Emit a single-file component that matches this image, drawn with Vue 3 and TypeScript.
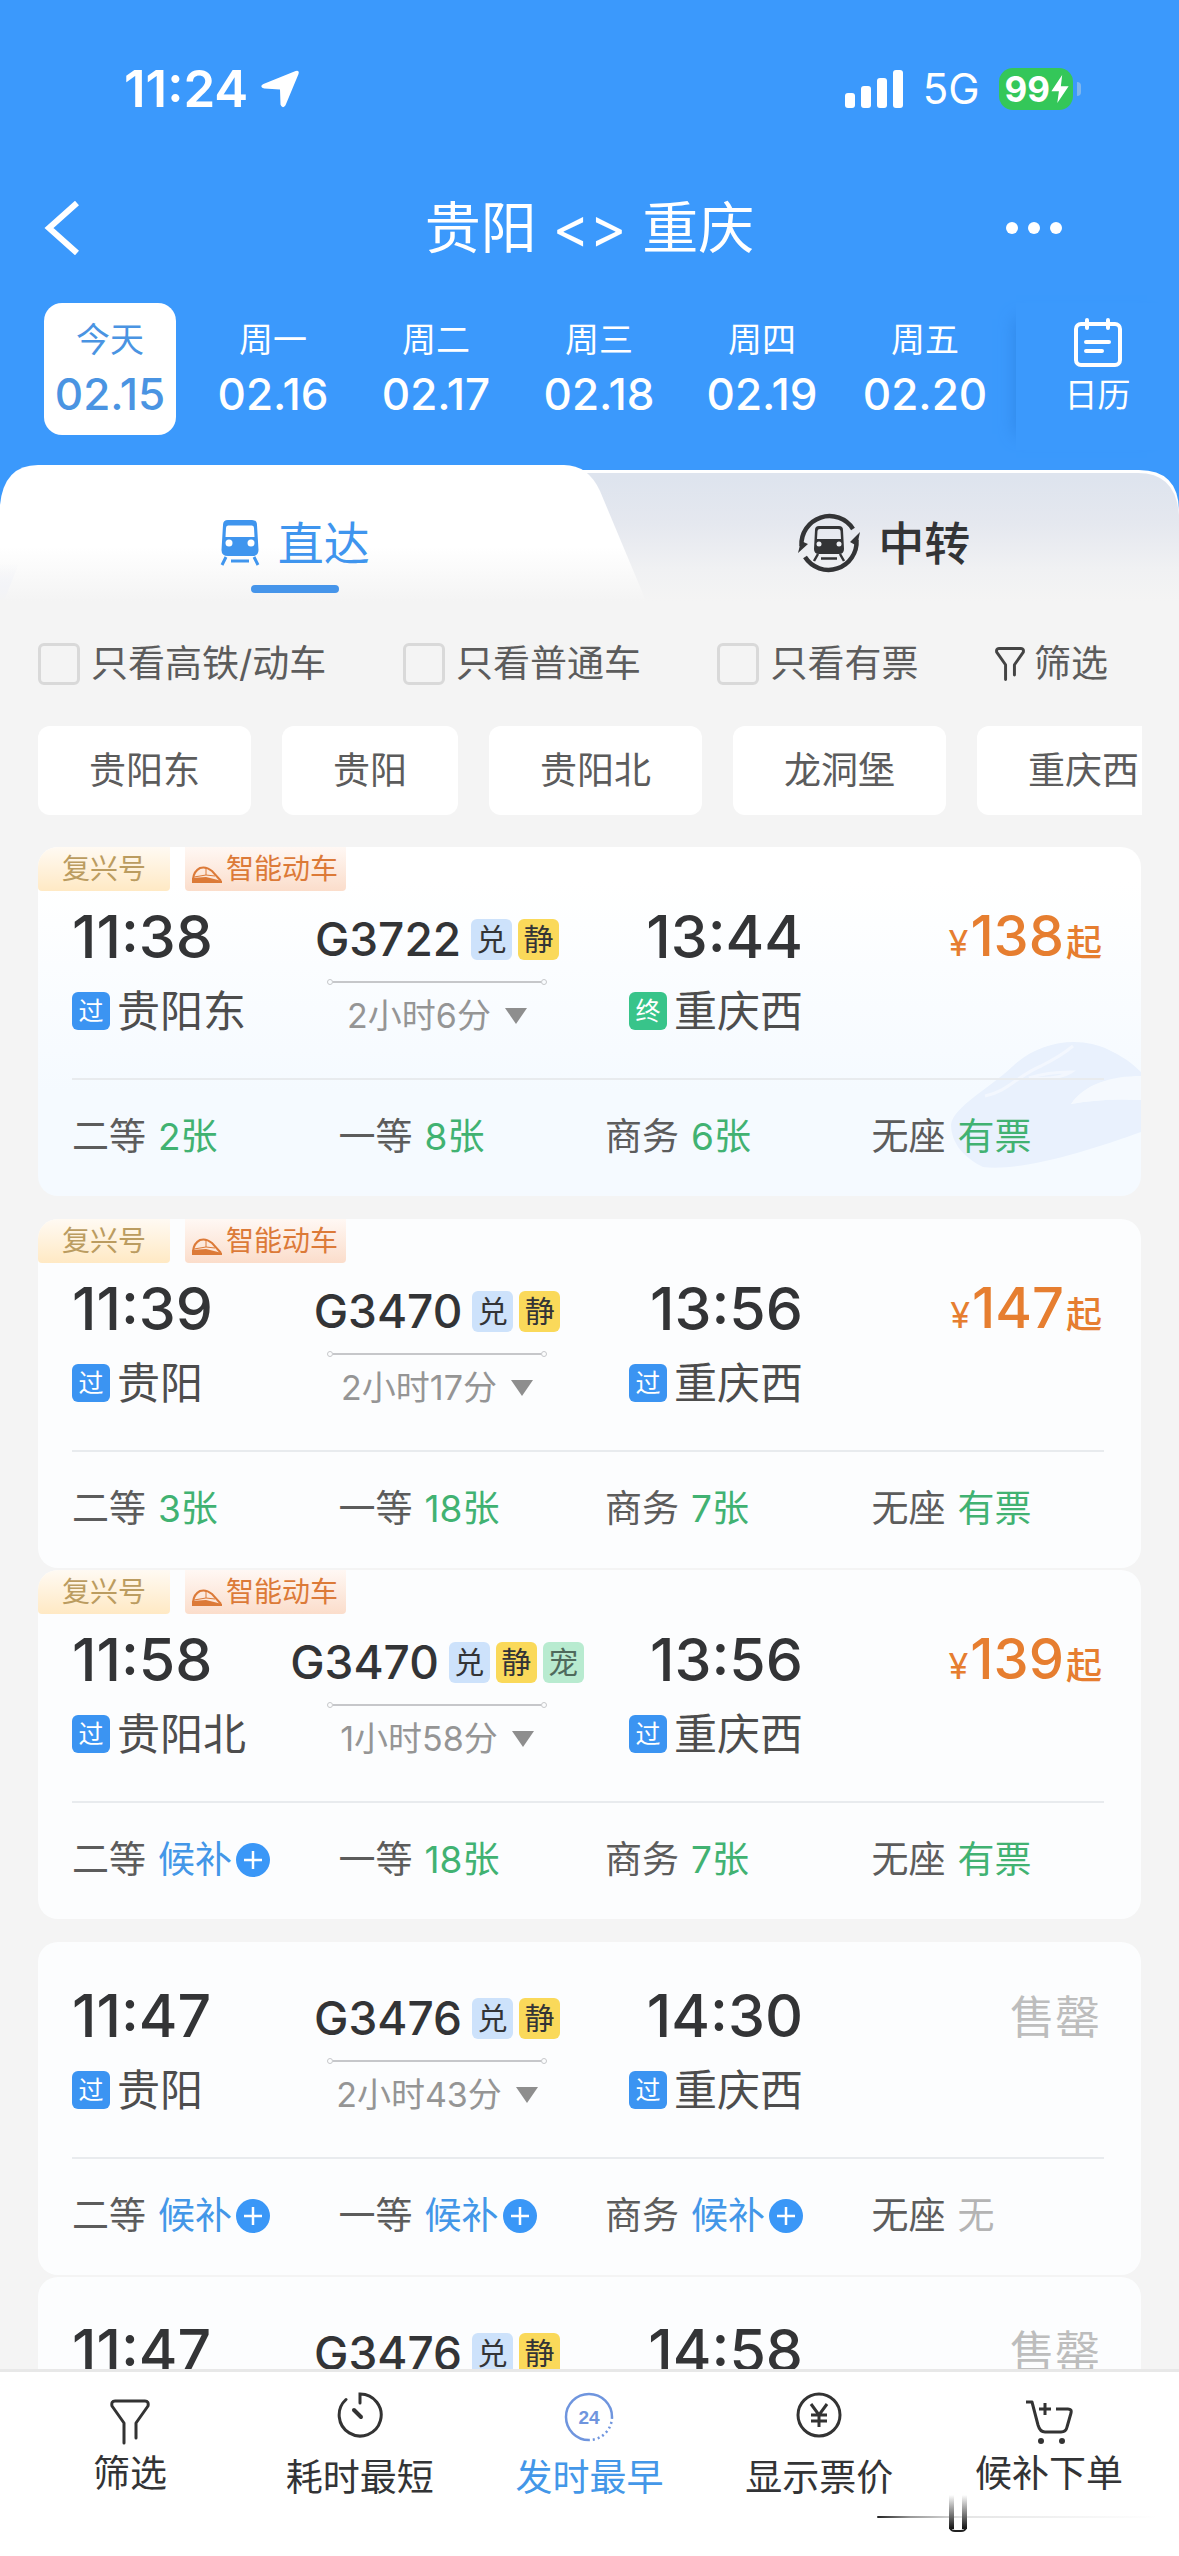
<script setup lang="ts">
interface Seat {
  name: string
  value: string
  kind: 'ok' | 'wait' | 'none'
}

interface Station {
  name: string
  mark: string
}

interface Train {
  id: number
  tagged: boolean
  art: boolean
  joined: boolean
  depart: string
  arrive: string
  from: Station
  to: Station
  no: string
  badges: string[]
  duration: string
  price: string
  seats: Seat[]
}

const days = [
  { week: '今天', date: '02.15' },
  { week: '周一', date: '02.16' },
  { week: '周二', date: '02.17' },
  { week: '周三', date: '02.18' },
  { week: '周四', date: '02.19' },
  { week: '周五', date: '02.20' },
]

const filters = ['只看高铁/动车', '只看普通车', '只看有票']
const stations = ['贵阳东', '贵阳', '贵阳北', '龙洞堡', '重庆西']

const badgeClass: Record<string, string> = { 兑: 'blue', 静: 'yellow', 宠: 'green' }

const ok = (name: string, value: string): Seat => ({ name, value, kind: 'ok' })
const wait = (name: string): Seat => ({ name, value: '候补', kind: 'wait' })

const trains: Train[] = [
  {
    id: 1, tagged: true, art: true, joined: false,
    depart: '11:38', arrive: '13:44',
    from: { name: '贵阳东', mark: '过' }, to: { name: '重庆西', mark: '终' },
    no: 'G3722', badges: ['兑', '静'], duration: '2小时6分', price: '138',
    seats: [ok('二等', '2张'), ok('一等', '8张'), ok('商务', '6张'), ok('无座', '有票')],
  },
  {
    id: 2, tagged: true, art: false, joined: false,
    depart: '11:39', arrive: '13:56',
    from: { name: '贵阳', mark: '过' }, to: { name: '重庆西', mark: '过' },
    no: 'G3470', badges: ['兑', '静'], duration: '2小时17分', price: '147',
    seats: [ok('二等', '3张'), ok('一等', '18张'), ok('商务', '7张'), ok('无座', '有票')],
  },
  {
    id: 3, tagged: true, art: false, joined: true,
    depart: '11:58', arrive: '13:56',
    from: { name: '贵阳北', mark: '过' }, to: { name: '重庆西', mark: '过' },
    no: 'G3470', badges: ['兑', '静', '宠'], duration: '1小时58分', price: '139',
    seats: [wait('二等'), ok('一等', '18张'), ok('商务', '7张'), ok('无座', '有票')],
  },
  {
    id: 4, tagged: false, art: false, joined: false,
    depart: '11:47', arrive: '14:30',
    from: { name: '贵阳', mark: '过' }, to: { name: '重庆西', mark: '过' },
    no: 'G3476', badges: ['兑', '静'], duration: '2小时43分', price: '',
    seats: [wait('二等'), wait('一等'), wait('商务'), { name: '无座', value: '无', kind: 'none' }],
  },
  {
    id: 5, tagged: false, art: false, joined: true,
    depart: '11:47', arrive: '14:58',
    from: { name: '贵阳', mark: '过' }, to: { name: '重庆西', mark: '过' },
    no: 'G3476', badges: ['兑', '静'], duration: '3小时11分', price: '',
    seats: [wait('二等'), wait('一等'), wait('商务'), { name: '无座', value: '无', kind: 'none' }],
  },
]
</script>

<template>
  <div class="app">
    <header class="top">
      <div class="status">
        <div class="clock">
          <span>11:24</span>
          <svg width="40" height="40" viewBox="0 0 40 40">
            <path d="M36 3 Q38.500 2 37.600 4.500 L24.500 36 Q22.600 38.500 21.500 35.500 L21 20.500 Q20.900 19.500 19.900 19.500 L4.500 18.500 Q0.500 17.500 3.800 16 Z" fill="#fff" stroke="#fff" stroke-width="2" stroke-linejoin="round" />
          </svg>
        </div>
        <div class="signal">
          <svg width="60" height="40" viewBox="0 0 60 40" fill="#fff">
            <rect x="0" y="24" width="10" height="15" rx="3" />
            <rect x="16" y="17" width="10" height="22" rx="3" />
            <rect x="32" y="9" width="10" height="30" rx="3" />
            <rect x="48" y="1" width="10" height="38" rx="3" />
          </svg>
          <span class="net">5G</span>
          <span class="battery">
            <span>99</span>
            <svg width="20" height="28" viewBox="0 0 18 26"><path d="M11 0 L1 15 H8 L6.5 26 L17 10.5 H9.8 Z" fill="#fff" /></svg>
          </span>
          <i class="nub"></i>
        </div>
      </div>

      <div class="nav">
        <button class="icon-btn" aria-label="返回">
          <svg width="38" height="54" viewBox="0 0 38 54"><path d="M35 2 L7 27 L35 52" fill="none" stroke="#fff" stroke-width="6" /></svg>
        </button>
        <h1>贵阳 &lt;&gt; 重庆</h1>
        <button class="icon-btn more" aria-label="更多">
          <svg width="58" height="14" viewBox="0 0 58 14" fill="#fff"><circle cx="7" cy="7" r="6" /><circle cx="29" cy="7" r="6" /><circle cx="51" cy="7" r="6" /></svg>
        </button>
      </div>

      <div class="dates">
        <div class="days">
          <button v-for="(d, i) in days" :key="d.date" class="day" :class="{ active: i === 0 }">
            <span class="week">{{ d.week }}</span>
            <span class="date">{{ d.date }}</span>
          </button>
        </div>
        <button class="calendar">
          <svg width="50" height="50" viewBox="0 0 50 50" fill="none" stroke="#fff" stroke-width="4" stroke-linecap="round">
            <rect x="3" y="6" width="44" height="41" rx="5" />
            <path d="M14 2v8M35 2v8M13 24h23M13 33h16" />
          </svg>
          <span>日历</span>
        </button>
      </div>
    </header>

    <div class="tabs">
      <svg class="tabs-bg" viewBox="0 0 1179 136" preserveAspectRatio="none">
        <defs>
          <linearGradient id="tabRight" x1="0" y1="0" x2="0" y2="1">
            <stop offset="0.04" stop-color="#dee4ee" />
            <stop offset="0.4" stop-color="#e5e8ef" />
            <stop offset="0.75" stop-color="#f0f1f3" />
            <stop offset="1" stop-color="#f4f4f4" />
          </linearGradient>
          <linearGradient id="tabLeft" x1="0" y1="0" x2="0" y2="1">
            <stop offset="0" stop-color="#fff" />
            <stop offset="0.6" stop-color="#fff" />
            <stop offset="1" stop-color="#f4f4f4" />
          </linearGradient>
          <linearGradient id="tabEdge" x1="0" y1="0" x2="0" y2="1">
            <stop offset="0.5" stop-color="#f3f4f8" stop-opacity="0" />
            <stop offset="0.8" stop-color="#f3f4f8" />
            <stop offset="1" stop-color="#f4f4f4" />
          </linearGradient>
        </defs>
        <path d="M540 5 H1139 Q1179 5 1179 47 V136 H540 Z" fill="#fff" />
        <path d="M540 8 H1138 Q1176 8 1179 50 V136 H540 Z" fill="url(#tabRight)" />
        <path d="M0 136 V40 Q4 0 38 0 H564 Q588 0 600 26 L646 136 Z" fill="url(#tabLeft)" />
        <path d="M0 60 H34 L4 136 H0 Z" fill="url(#tabEdge)" />
      </svg>
      <div class="tabs-row">
        <button class="tab active">
          <span class="tab-label">
            <svg width="40" height="46" viewBox="0 0 40 46">
              <path fill="#3f95ee" fill-rule="evenodd" d="M8 0 H32 Q37 0 37 5 L38.500 30 Q38.500 36 32 36 H8 Q1.500 36 1.500 30 L3 5 Q3 0 8 0 Z M8 5.500 Q6 5.500 6 8 L5.500 17 H34.500 L34 8 Q34 5.500 32 5.500 Z" />
              <circle cx="9" cy="23" r="3.500" fill="#fff" /><circle cx="31" cy="23" r="3.500" fill="#fff" />
              <path d="M6 37 L2 45 M34 37 L38 45 M11 41 H29" stroke="#3f95ee" stroke-width="3" fill="none" />
            </svg>
            直达
          </span>
          <i class="underline"></i>
        </button>
        <button class="tab">
          <span class="tab-label">
            <svg width="62" height="62" viewBox="0 0 62 62">
              <g fill="none" stroke="#333436" stroke-width="4.500">
                <path d="M3.500 34 A28 28 0 0 1 55 17" />
                <path d="M58.500 28 A28 28 0 0 1 7 45" />
              </g>
              <path d="M0 41 L3 29 L10 32 Z M62 20 L59 34 L52 30 Z" fill="#333436" />
              <path fill="#333436" fill-rule="evenodd" d="M21 14 H41 Q45 14 45 18 L46 37 Q46 42 41 42 H21 Q16 42 16 37 L17 18 Q17 14 21 14 Z M22 17 Q19.500 17 19.500 19 L19 27 H43 L42.500 19 Q42.500 17 40 17 Z" />
              <circle cx="21" cy="32" r="2.500" fill="#eceef2" /><circle cx="41" cy="32" r="2.500" fill="#eceef2" />
              <path d="M20 42 L16 49 M42 42 L46 49 M23 46.500 H39" stroke="#333436" stroke-width="2.500" />
            </svg>
            中转
          </span>
          <i class="underline"></i>
        </button>
      </div>
    </div>

    <div class="filters">
      <label v-for="f in filters" :key="f" class="check"><input type="checkbox" />{{ f }}</label>
      <button class="filter-btn">
        <svg width="30" height="34" viewBox="0 0 40 46" fill="none" stroke="#444" stroke-width="4" stroke-linejoin="round" stroke-linecap="round">
          <path d="M14 44 V24 L2 7 Q1 2 5 2 H35 Q39 2 38 7 L26 24 V38" />
        </svg>
        筛选
      </button>
    </div>

    <div class="chips">
      <button v-for="s in stations" :key="s" class="chip">{{ s }}</button>
    </div>

    <main class="list">
      <article v-for="t in trains" :key="t.id" class="card" :class="{ art: t.art, joined: t.joined, plain: !t.tagged }">
        <svg v-if="t.art" class="watermark" width="190" height="126" viewBox="0 0 190 126">
          <path d="M0 82 C4 64 36 48 62 24 C90 -2 130 -6 158 8 Q176 16 190 30 V36 C160 34 134 42 120 62 Q152 56 190 58 V90 C140 108 70 130 32 125 C14 116 0 102 0 82 Z" fill="#e9f1fd" />
          <path d="M190 34 C160 34 134 42 120 62 Q152 56 190 58 Z" fill="#f5f9fe" />
          <path d="M34 54 C56 50 66 34 90 24 Q110 14 122 4 M78 36 Q96 30 120 30 Q108 38 78 36" fill="none" stroke="#f3f7fe" stroke-width="3" />
        </svg>
        <div v-if="t.tagged" class="tags">
          <span class="tag gold">复兴号</span>
          <span class="tag orange">
            <svg width="32" height="18" viewBox="0 0 32 18" fill="none" stroke="#dc7a38">
              <path d="M2 13 Q3 5 9 2 Q15 0 21 5 L30 15" stroke-width="2" />
              <path d="M15 2 V9 L24 10 M3 11 L15 9" stroke-width="1" />
              <path d="M1 12 L15 11 L31 15 V17 H1 Z" fill="#dc7a38" stroke="none" />
            </svg>
            智能动车
          </span>
        </div>
        <div class="main">
          <div class="stop">
            <time>{{ t.depart }}</time>
            <div class="station"><span class="mark">{{ t.from.mark }}</span>{{ t.from.name }}</div>
          </div>
          <div class="middle">
            <div class="number">
              <span>{{ t.no }}</span>
              <span class="badges"><span v-for="b in t.badges" :key="b" class="badge" :class="badgeClass[b]">{{ b }}</span></span>
            </div>
            <svg width="220" height="10" viewBox="0 0 220 10" fill="none" stroke="#c6c7ca">
              <path d="M6 5 H214" stroke-width="2" /><circle cx="3" cy="5" r="2.500" /><circle cx="217" cy="5" r="2.500" />
            </svg>
            <button class="duration">
              {{ t.duration }}
              <svg width="22" height="16" viewBox="0 0 22 16"><path d="M0 0 H22 L11 16 Z" fill="#8e8e8e" /></svg>
            </button>
          </div>
          <div class="stop arrive">
            <time>{{ t.arrive }}</time>
            <div class="station"><span class="mark" :class="{ end: t.to.mark === '终' }">{{ t.to.mark }}</span>{{ t.to.name }}</div>
          </div>
          <div v-if="t.price" class="price"><small>¥</small><b>{{ t.price }}</b><small class="from">起</small></div>
          <div v-else class="sold">售罄</div>
        </div>
        <hr />
        <div class="seats">
          <div v-for="s in t.seats" :key="s.name" class="seat">
            <span>{{ s.name }}</span>
            <button v-if="s.kind === 'wait'" class="wait">
              {{ s.value }}
              <svg width="34" height="34" viewBox="0 0 34 34"><circle cx="17" cy="17" r="17" fill="#3a97f7" /><path d="M8 17 H26 M17 8 V26" stroke="#fff" stroke-width="2.500" /></svg>
            </button>
            <span v-else :class="s.kind">{{ s.value }}</span>
          </div>
        </div>
      </article>
    </main>

    <nav class="bottom">
      <button class="item high">
        <svg width="40" height="46" viewBox="0 0 40 46" fill="none" stroke="#333" stroke-width="3" stroke-linejoin="round" stroke-linecap="round">
          <path d="M14 44 V24 L2 7 Q1 2 5 2 H35 Q39 2 38 7 L26 24 V39" />
        </svg>
        筛选
      </button>
      <button class="item">
        <svg width="46" height="46" viewBox="0 0 46 46" fill="none" stroke="#333" stroke-width="3" stroke-linecap="round">
          <path d="M9 7.500 A21 21 0 1 0 23 2 V11" /><path d="M17 18 L24 25" stroke-width="4" />
        </svg>
        耗时最短
      </button>
      <button class="item active">
        <svg width="50" height="50" viewBox="0 0 50 50">
          <path d="M25 48 A23 23 0 1 1 48 25" fill="none" stroke="#6f95de" stroke-width="2.500" />
          <path d="M48 25 A23 23 0 0 1 25 48" fill="none" stroke="#6f95de" stroke-width="2.500" stroke-dasharray="2 3" />
          <text x="25" y="32" text-anchor="middle" font-family="Liberation Sans, sans-serif" font-size="19" font-weight="700" fill="#6f95de">24</text>
        </svg>
        发时最早
      </button>
      <button class="item">
        <svg width="46" height="46" viewBox="0 0 46 46" fill="none" stroke="#333" stroke-width="3">
          <circle cx="23" cy="23" r="21" /><path d="M15 12 L23 23 L31 12 M23 23 V35 M15 23 H31 M15 29 H31" />
        </svg>
        显示票价
      </button>
      <button class="item high">
        <svg width="48" height="46" viewBox="0 0 48 46" fill="none" stroke="#333" stroke-width="3" stroke-linejoin="round">
          <path d="M1 3 H7 L13 26 Q15 33 20 33 H36 Q41 33 42 28 L46 14 Q47 10 43 10 H31" />
          <path d="M20 4 V16 M14 10 H26" />
          <circle cx="16" cy="42" r="3" fill="#333" stroke="none" /><circle cx="37" cy="42" r="3" fill="#333" stroke="none" />
        </svg>
        候补下单
      </button>
      <svg class="streak" width="280" height="40" viewBox="0 0 280 40">
        <defs>
          <linearGradient id="streakLine" x1="0" y1="0" x2="1" y2="0">
            <stop offset="0" stop-color="#222" />
            <stop offset="0.12" stop-color="#999" />
            <stop offset="0.3" stop-color="#e4e4e4" />
            <stop offset="1" stop-color="#fff" />
          </linearGradient>
          <linearGradient id="streakBar" x1="0" y1="0" x2="0" y2="1">
            <stop offset="0" stop-color="#fff" />
            <stop offset="1" stop-color="#111" />
          </linearGradient>
        </defs>
        <rect x="0" y="21" width="280" height="2" rx="1" fill="url(#streakLine)" />
        <rect x="72" y="0" width="5" height="34" fill="url(#streakBar)" />
        <rect x="85" y="0" width="5" height="34" fill="url(#streakBar)" />
        <path d="M73 33 Q74 36 78 36 H84 Q88 36 89 33" fill="none" stroke="#222" stroke-width="2" />
      </svg>
    </nav>
  </div>
</template>

<style>
body {
  margin: 0;
  background: #f4f4f4;
}
</style>

<style scoped>
.app {
  display: flex;
  flex-direction: column;
  height: 100vh;
  overflow: hidden;
  background: #f4f4f4;
  color: #333436;
  font-family: Inter, 'Noto Sans CJK SC', sans-serif;
  font-size: 37px;
  line-height: 48px;
  white-space: nowrap;
}

button {
  margin: 0;
  padding: 0;
  border: 0;
  background: none;
  color: inherit;
  font: inherit;
}

svg {
  display: block;
  flex: none;
}

.top,
.tabs,
.filters,
.chips,
.bottom {
  flex: none;
}

.top {
  background: #3b99fc;
  color: #fff;
}

.status {
  display: flex;
  justify-content: space-between;
  align-items: center;
  height: 177px;
  padding: 0 98px 0 124px;
}

.clock,
.signal {
  display: flex;
  align-items: center;
}

.clock {
  gap: 12px;
  font-size: 51px;
  font-weight: 600;
}

.net {
  margin: 0 19px 0 18px;
  font-size: 42px;
}

.battery {
  display: flex;
  align-items: center;
  height: 42px;
  padding: 0 3px 0 6px;
  border-radius: 14px;
  background: #34c759;
  font-size: 35px;
  font-weight: 700;
}

.nub {
  width: 4px;
  height: 14px;
  margin-left: 4px;
  border-radius: 0 4px 4px 0;
  background: #7fb6ee;
}

.nav {
  display: grid;
  grid-template-columns: 1fr auto 1fr;
  align-items: center;
  height: 102px;
  padding: 0 42px;
}

.more {
  justify-self: end;
  margin-right: 74px;
}

h1 {
  margin: 0;
  font-size: 56px;
  font-weight: 400;
  line-height: 80px;
}

.dates {
  display: flex;
  justify-content: space-between;
  padding: 24px 0 15px 44px;
}

.days {
  display: flex;
  gap: 31px;
  padding-bottom: 15px;
}

.day {
  display: flex;
  flex-direction: column;
  align-items: center;
  width: 132px;
  padding: 13px 0 11px;
  border-radius: 18px;
}

.day.active {
  background: #fff;
  color: #4a94e2;
}

.week {
  font-size: 34px;
  line-height: 48px;
}

.date {
  font-size: 44px;
  line-height: 60px;
  font-weight: 500;
}

.calendar {
  display: flex;
  flex-direction: column;
  align-items: center;
  width: 163px;
  padding-top: 15px;
  box-shadow: -16px 0 16px -16px #2f86e6;
  font-size: 33px;
}

.calendar span {
  margin-top: 3px;
}

.tabs {
  display: grid;
  background: #3b99fc;
}

.tabs-bg,
.tabs-row {
  grid-area: 1 / 1;
}

.tabs-bg {
  width: 100%;
  height: 136px;
}

.tabs-row {
  display: grid;
  grid-template-columns: 1fr 1fr;
  z-index: 1;
}

.tab {
  display: flex;
  flex-direction: column;
  align-items: center;
  padding-top: 42px;
  font-size: 46px;
  font-weight: 500;
}

.tab.active {
  color: #3f95ee;
  font-weight: 400;
}

.tab-label {
  display: flex;
  align-items: center;
  gap: 18px;
  height: 72px;
}

.underline {
  width: 88px;
  height: 8px;
  margin-top: 6px;
  border-radius: 4px;
}

.active .underline {
  background: #4695ea;
}

.filters {
  display: flex;
  justify-content: space-between;
  align-items: center;
  height: 125px;
  padding: 0 71px 0 38px;
  color: #5c5c5c;
}

.check {
  display: flex;
  align-items: center;
  gap: 11px;
}

.check input {
  appearance: none;
  width: 42px;
  height: 42px;
  margin: 0;
  border: 3px solid #d9d9d9;
  border-radius: 6px;
}

.filter-btn {
  display: flex;
  align-items: center;
  gap: 9px;
}

.chips {
  display: flex;
  gap: 31px;
  margin: 0 37px 32px 38px;
  overflow: hidden;
}

.chip {
  flex: none;
  height: 89px;
  padding: 0 51px;
  border-radius: 12px;
  background: #fff;
  color: #5c5c5c;
}

.list {
  flex: 1;
  min-height: 0;
  margin: 0 38px;
  overflow: hidden;
}

.card {
  position: relative;
  margin-top: 23px;
  padding-bottom: 2px;
  border-radius: 20px;
  background: #fcfdfe;
  overflow: hidden;
}

.card.joined {
  margin-top: 2px;
}

.card.art {
  margin-top: 0;
  background: linear-gradient(#fff 10%, #f5faff 70%);
}

.watermark {
  position: absolute;
  right: 0;
  top: 195px;
}

.tags {
  display: flex;
  gap: 15px;
  height: 44px;
  font-size: 28px;
  line-height: 44px;
}

.tag {
  display: flex;
  align-items: center;
  border-radius: 0 0 4px 4px;
}

.gold {
  padding: 0 24px;
  background: linear-gradient(#fffaf3, #ffe9c4);
  color: #bb9c60;
}

.orange {
  gap: 3px;
  padding: 0 8px 0 6px;
  background: linear-gradient(#fff8f4, #fbddcb);
  color: #dc7a38;
}

.orange svg {
  margin-top: 12px;
}

.main {
  position: relative;
  display: grid;
  grid-template-columns: 200fr 330fr 201fr 301fr;
  padding: 10px 37px 33px 34px;
}

.plain .main {
  padding-top: 38px;
}

.stop {
  display: flex;
  flex-direction: column;
  gap: 8px;
}

.arrive {
  align-items: flex-end;
}

time {
  font-size: 59px;
  line-height: 72px;
  font-weight: 500;
}

.station {
  display: flex;
  align-items: center;
  gap: 7px;
  color: #4d4d4d;
  font-size: 43px;
  line-height: 60px;
}

.mark {
  width: 38px;
  border-radius: 6px;
  background: #3b94f2;
  color: #fff;
  font-size: 25px;
  line-height: 38px;
  text-align: center;
}

.mark.end {
  background: #38c48a;
}

.middle {
  display: flex;
  flex-direction: column;
  align-items: center;
}

.number {
  display: flex;
  align-items: center;
  gap: 10px;
  font-size: 46px;
  line-height: 76px;
  font-weight: 500;
}

.badges {
  display: flex;
  gap: 6px;
}

.badge {
  width: 41px;
  border-radius: 6px;
  font-size: 30px;
  font-weight: 400;
  line-height: 41px;
  text-align: center;
}

.blue {
  background: #cde2fb;
}

.yellow {
  background: #fad95a;
}

.green {
  background: #b8ebd0;
  color: #4f6a5c;
}

.duration {
  display: flex;
  align-items: center;
  gap: 14px;
  color: #959595;
  font-size: 34px;
  line-height: 58px;
}

.price {
  display: flex;
  justify-content: flex-end;
  align-items: baseline;
  padding-right: 2px;
  color: #e67e30;
  line-height: 70px;
}

.price small {
  font-size: 36px;
}

.price .from {
  font-weight: 500;
}

.price b {
  margin: 0 2px;
  font-size: 56px;
  font-weight: 500;
}

.sold {
  padding-right: 4px;
  color: #bdbdbd;
  font-size: 45px;
  line-height: 76px;
  text-align: right;
}

hr {
  position: relative;
  height: 2px;
  margin: 0 37px 0 34px;
  border: 0;
  background: #e8ebee;
}

.seats {
  position: relative;
  display: grid;
  grid-template-columns: repeat(4, 1fr);
  align-items: center;
  height: 114px;
  padding: 0 3px 0 34px;
  color: #5c5c5c;
}

.seat,
.wait {
  display: flex;
  align-items: center;
}

.seat {
  gap: 12px;
}

.wait {
  gap: 4px;
  color: #4397e8;
}

.ok {
  color: #41b272;
}

.none {
  color: #b4b4b4;
}

.bottom {
  position: relative;
  display: grid;
  grid-template-columns: repeat(5, 1fr);
  padding: 20px 15px 54px;
  border-top: 3px solid #e8e8e8;
  background: #fff;
}

.item {
  display: flex;
  flex-direction: column;
  align-items: center;
  justify-content: space-between;
  height: 110px;
}

.item.high {
  height: 106px;
  padding-top: 7px;
}

.item.active {
  color: #4397e8;
}

.streak {
  position: absolute;
  right: 22px;
  bottom: 21px;
}
</style>
